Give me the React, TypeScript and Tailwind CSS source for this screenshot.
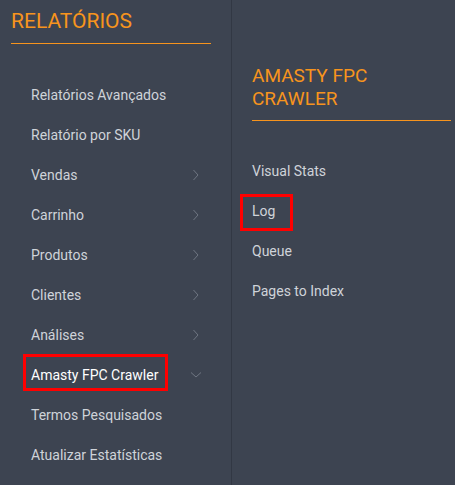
import React from "react";

const Chevron = ({ down }: { down?: boolean }) =>
  down ? (
    <svg width="12" height="8" viewBox="0 0 12 8" className="absolute left-[190px] top-[16px]">
      <path d="M1 1.5 L6 6 L11 1.5" fill="none" stroke="#6f7682" strokeWidth="1" />
    </svg>
  ) : (
    <svg width="8" height="12" viewBox="0 0 8 12" className="absolute left-[192px] top-[14px]">
      <path d="M1.5 1 L6 6 L1.5 11" fill="none" stroke="#6f7682" strokeWidth="1" />
    </svg>
  );

const leftItems: { label: string; arrow?: "right" | "down"; active?: boolean }[] = [
  { label: "Relatórios Avançados" },
  { label: "Relatório por SKU" },
  { label: "Vendas", arrow: "right" },
  { label: "Carrinho", arrow: "right" },
  { label: "Produtos", arrow: "right" },
  { label: "Clientes", arrow: "right" },
  { label: "Análises", arrow: "right" },
  { label: "Amasty FPC Crawler", arrow: "down", active: true },
  { label: "Termos Pesquisados" },
  { label: "Atualizar Estatísticas" },
];

const rightItems = ["Visual Stats", "Log", "Queue", "Pages to Index"];

export default function App() {
  return (
    <div
      className="flex w-[455px] h-[485px] bg-[#3d4451] overflow-hidden"
      style={{ fontFamily: "Roboto, 'Liberation Sans', sans-serif" }}
    >
      <div className="w-[232px] shrink-0 border-r border-[#323844] flex flex-col">
        <div className="ml-[11px] w-[200px] pt-[10px] pb-[10px]">
          <div className="text-[21px] leading-[23px] text-[#f7941d]">RELATÓRIOS</div>
        </div>
        <div className="ml-[11px] w-[200px] h-px bg-[#f7941d]" />
        <div className="mt-[31px] flex flex-col">
          {leftItems.map((it) => (
            <div key={it.label} className="relative h-[40px] pl-[31px] flex items-center">
              <span className={`text-[14px] ${it.active ? "text-white" : "text-[#cfd3d9]"}`}>
                {it.label}
              </span>
              {it.active && (
                <span className="absolute left-[23px] top-[-1px] w-[145px] h-[37px] border-[3px] border-[#ff0000]" />
              )}
              {it.arrow === "right" && <Chevron />}
              {it.arrow === "down" && <Chevron down />}
            </div>
          ))}
        </div>
      </div>
      <div className="flex-1 flex flex-col">
        <div className="ml-[20px] w-[199px] pt-[64px] pb-[10px]">
          <div className="text-[19px] leading-[23px] text-[#f7941d]">
            AMASTY FPC
            <br />
            CRAWLER
          </div>
        </div>
        <div className="ml-[20px] w-[199px] h-px bg-[#f7941d]" />
        <div className="mt-[30px] flex flex-col">
          {rightItems.map((l) => (
            <div key={l} className="relative h-[40px] pl-[20px] flex items-center">
              <span className="text-[14px] text-[#cfd3d9]">{l}</span>
              {l === "Log" && (
                <span className="absolute left-[8px] top-[3px] w-[53px] h-[37px] border-[3px] border-[#ff0000]" />
              )}
            </div>
          ))}
        </div>
      </div>
    </div>
  );
}
